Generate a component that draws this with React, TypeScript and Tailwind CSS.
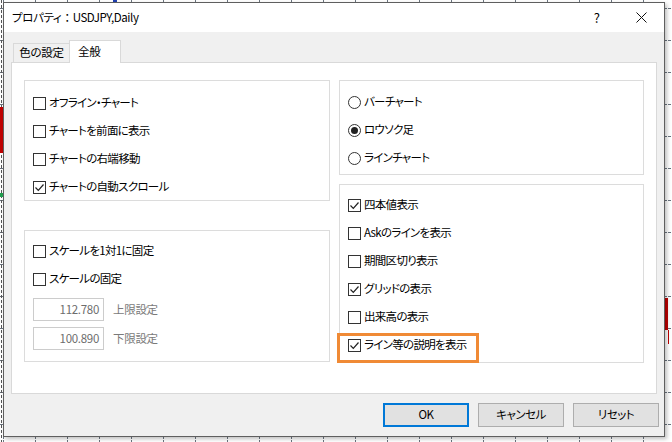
import React from 'react';

const FONT = "font-['Meiryo_UI','Noto_Sans_CJK_JP',sans-serif] [font-feature-settings:'palt']";

// 背景のチャート（ダイアログの後ろ）
function ChartBackdrop() {
  const xs = Array.from({ length: 21 }, (_, i) => 3 + 32 * i);
  const ys = Array.from({ length: 14 }, (_, i) => 8 + 32 * i);
  return (
    <svg className="absolute inset-0" width={672} height={442}>
      {xs.map((x) => (
        <line key={x} x1={x + 0.5} y1={0} x2={x + 0.5} y2={442} stroke="#6b7580" strokeDasharray="3 1" />
      ))}
      {ys.map((y) => (
        <line key={y} x1={0} y1={y + 0.5} x2={672} y2={y + 0.5} stroke="#6b7580" strokeDasharray="3 1" />
      ))}
      <line x1={1.5} y1={0} x2={1.5} y2={442} stroke="#555" strokeDasharray="3 2" />
      <rect x={0} y={107} width={3} height={46} fill="#c00000" />
      <rect x={0} y={193} width={3} height={4} fill="#22a050" />
      <rect x={665} y={298} width={3} height={32} fill="#c00000" />
      <rect x={668} y={330} width={1} height={14} fill="#c00000" />
      <rect x={113} y={0} width={4} height={2} fill="#1f3fb0" />
    </svg>
  );
}

function Checkbox({ checked }: { checked?: boolean }) {
  return (
    <span className="flex w-[13px] h-[13px] shrink-0 items-center justify-center border border-[#333333] bg-white">
      {checked && (
        <svg width="11" height="11" viewBox="0 0 11 11">
          <path d="M1.5 5.5 L4.3 8.3 L9.5 2.5" fill="none" stroke="#222" strokeWidth="1.2" />
        </svg>
      )}
    </span>
  );
}

function Radio({ checked }: { checked?: boolean }) {
  return (
    <span className="flex w-[13px] h-[13px] shrink-0 items-center justify-center rounded-full border border-[#333333] bg-white">
      {checked && <span className="w-[7px] h-[7px] rounded-full bg-[#222]" />}
    </span>
  );
}

function Row({ children, label }: { children: React.ReactNode; label: string }) {
  return (
    <div className="flex h-[28px] items-center gap-[3px] pl-[8px]">
      {children}
      <span className="text-[11.5px] tracking-[-0.7px] leading-none text-black whitespace-nowrap">{label}</span>
    </div>
  );
}

function Group({ className, children }: { className: string; children: React.ReactNode }) {
  return <div className={`border border-[#dcdcdc] bg-white ${className}`}>{children}</div>;
}

function LimitInput({ value, label }: { value: string; label: string }) {
  return (
    <div className="flex items-center gap-[9px] pl-[8px]">
      <div className="flex w-[71px] h-[23px] items-center justify-end border border-[#cccccc] bg-white pr-[4px] text-[11.5px] tracking-[-0.3px] text-[#6d6d6d]">
        {value}
      </div>
      <span className="text-[11.5px] tracking-[-0.3px] text-[#7a7a7a]">{label}</span>
    </div>
  );
}

function DialogButton({ label, primary }: { label: string; primary?: boolean }) {
  return (
    <button
      className={`w-[86px] h-[24px] bg-[#e1e1e1] text-[11.5px] tracking-[-0.5px] text-black ${
        primary ? 'border-2 border-[#0078d7]' : 'border border-[#adadad]'
      }`}
    >
      {label}
    </button>
  );
}

export default function App() {
  return (
    <div className={`relative w-[672px] h-[442px] overflow-hidden bg-white pl-[3px] pt-[2px] ${FONT}`}>
      <ChartBackdrop />

      <div className="relative flex w-[662px] h-[435px] flex-col border border-[#5f5f5f] bg-[#f0f0f0] shadow-[2px_2px_4px_rgba(0,0,0,0.25)]">
        {/* タイトルバー */}
        <div className="flex h-[29px] shrink-0 items-center bg-white pl-[8px]">
          <span className="text-[11.5px] tracking-[-0.4px] text-black">
            プロパティ<span className="mx-[3px]">：</span>USDJPY,Daily
          </span>
          <span className="ml-auto mr-[36px] text-[13px] text-black">?</span>
          <svg className="mr-[17px]" width="11" height="11" viewBox="0 0 11 11">
            <path d="M0.5 0.5 L10.5 10.5 M10.5 0.5 L0.5 10.5" stroke="#111" strokeWidth="1" />
          </svg>
        </div>

        {/* タブ */}
        <div className="flex h-[30px] items-end pl-[9px] pt-[8px]">
          <div className="flex h-[19px] w-[57px] items-center justify-center border border-b-0 border-[#d9d9d9] bg-[#f0f0f0] text-[11.5px] tracking-[-0.3px] text-black">
            色の設定
          </div>
          <div className="relative z-10 -ml-px mb-[-1px] flex h-[23px] w-[52px] items-start border border-b-0 border-[#d9d9d9] bg-white pl-[8px] pt-[2px] text-[11.5px] tracking-[-0.3px] text-black">
            全般
          </div>
        </div>

        {/* タブ内容 */}
        <div className="mx-[7px] flex h-[332px] gap-[9px] border border-[#d9d9d9] bg-white pl-[12px] pt-[17px]">
          <div className="flex flex-col">
            <Group className="w-[306px] h-[121px] pt-[8px]">
              <Row label="オフライン・チャート"><Checkbox /></Row>
              <Row label="チャートを前面に表示"><Checkbox /></Row>
              <Row label="チャートの右端移動"><Checkbox /></Row>
              <Row label="チャートの自動スクロール"><Checkbox checked /></Row>
            </Group>

            <Group className="mt-[29px] w-[306px] h-[132px] pt-[6px]">
              <Row label="スケールを1対1に固定"><Checkbox /></Row>
              <Row label="スケールの固定"><Checkbox /></Row>
              <div className="mt-[5px] flex flex-col gap-[6px]">
                <LimitInput value="112.780" label="上限設定" />
                <LimitInput value="100.890" label="下限設定" />
              </div>
            </Group>
          </div>

          <div className="flex flex-col gap-[9px]">
            <Group className="w-[305px] h-[95px] pt-[7px]">
              <Row label="バーチャート"><Radio /></Row>
              <Row label="ロウソク足"><Radio checked /></Row>
              <Row label="ラインチャート"><Radio /></Row>
            </Group>

            <Group className="w-[305px] h-[179px] pt-[6px]">
              <Row label="四本値表示"><Checkbox checked /></Row>
              <Row label="Askのラインを表示"><Checkbox /></Row>
              <Row label="期間区切り表示"><Checkbox /></Row>
              <Row label="グリッドの表示"><Checkbox checked /></Row>
              <Row label="出来高の表示"><Checkbox /></Row>
              <div className="relative">
                <Row label="ライン等の説明を表示"><Checkbox checked /></Row>
                <span className="absolute left-[-3px] top-[2px] h-[30px] w-[142px] border-[3px] border-[#f08a35]" />
              </div>
            </Group>
          </div>
        </div>

        {/* ボタン */}
        <div className="flex justify-end gap-[9px] pr-[5px] pt-[9px]">
          <DialogButton label="OK" primary />
          <DialogButton label="キャンセル" />
          <DialogButton label="リセット" />
        </div>
      </div>
    </div>
  );
}
